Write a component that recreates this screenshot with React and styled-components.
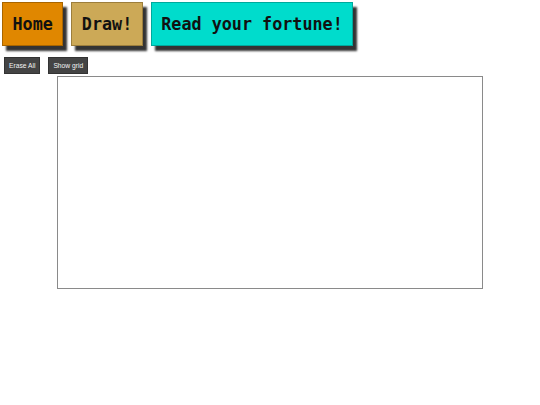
import React from 'react';
import styled, { createGlobalStyle } from 'styled-components';

const GlobalStyle = createGlobalStyle`
  html, body {
    margin: 0;
    padding: 0;
    background: #fff;
  }
`;

const Page = styled.div`
  width: 540px;
  font-family: 'Liberation Sans', Arial, sans-serif;
`;

const Nav = styled.nav`
  display: flex;
  gap: 8px;
  padding: 2px 0 0 2px;
`;

const NavButton = styled.a`
  display: block;
  box-sizing: border-box;
  height: 44px;
  padding: 0 9.5px;
  line-height: 42px;
  font-family: 'DejaVu Sans Mono', monospace;
  font-weight: bold;
  font-size: 16.75px;
  color: #111;
  text-decoration: none;
  background: ${p => p.$bg};
  border: 1px solid ${p => p.$edge};
  box-shadow: 4px 5px 2px #333;
`;

const Controls = styled.div`
  display: flex;
  gap: 8px;
  padding: 11px 0 0 4px;
`;

const SmallButton = styled.button`
  box-sizing: border-box;
  height: 17px;
  padding: 0 4px;
  margin: 0;
  background: #444;
  color: #f4f4f4;
  border: 1px solid #333;
  font-family: 'Liberation Sans', Arial, sans-serif;
  font-size: 6.7px;
  line-height: 15px;
`;

const Board = styled.div`
  box-sizing: border-box;
  width: 426px;
  height: 213px;
  margin: 2px auto 0;
  border: 1px solid #8a8a8a;
  background: #fff;
`;

export default function App() {
  return (
    <Page>
      <GlobalStyle />
      <Nav>
        <NavButton href="#" $bg="#e08700" $edge="#a86500">Home</NavButton>
        <NavButton href="#" $bg="#cca957" $edge="#9c7e3c">Draw!</NavButton>
        <NavButton href="#" $bg="#00dccc" $edge="#00a99c">Read your fortune!</NavButton>
      </Nav>
      <Controls>
        <SmallButton>Erase All</SmallButton>
        <SmallButton>Show grid</SmallButton>
      </Controls>
      <Board />
    </Page>
  );
}
